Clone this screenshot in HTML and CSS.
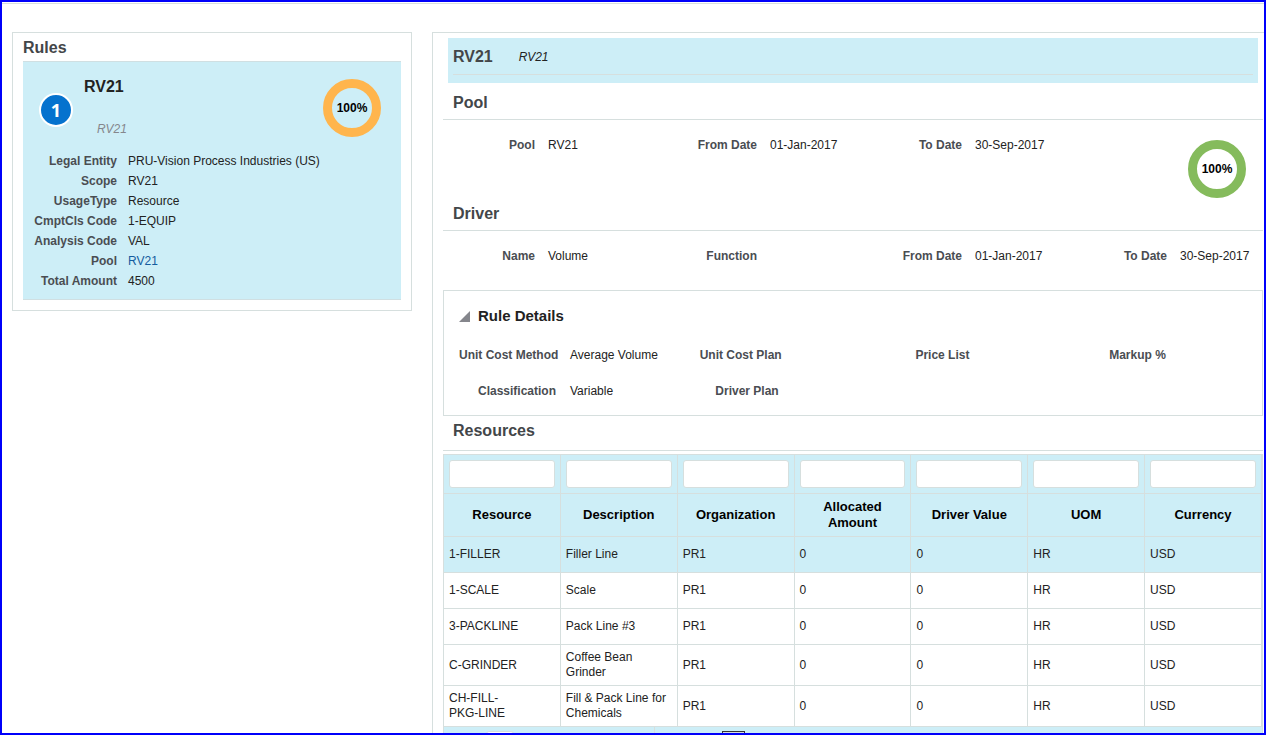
FILE: index.html
```html
<!DOCTYPE html>
<html lang="en">
  <head>
    <meta charset="UTF-8" />
    <meta name="viewport" content="width=device-width, initial-scale=1.0" />
    <title>Rules</title>
    <link rel="stylesheet" href="styles.css">
  </head>
  <body>
    <main class="page">
      <section class="rules">
        <h2 class="rules-title">Rules</h2>
        <div class="card">
          <div class="card-head">
            <span class="badge">1</span>
            <div class="names">
              <h3 class="name">RV21</h3>
              <em class="desc">RV21</em>
            </div>
            <svg class="ring" viewBox="0 0 58 58">
              <circle cx="29" cy="29" r="24.5" fill="none" stroke="#ffb54d" stroke-width="9" />
              <text x="29" y="33" text-anchor="middle">100%</text>
            </svg>
          </div>
          <dl class="facts">
            <dt>Legal Entity</dt><dd>PRU-Vision Process Industries (US)</dd>
            <dt>Scope</dt><dd>RV21</dd>
            <dt>UsageType</dt><dd>Resource</dd>
            <dt>CmptCls Code</dt><dd>1-EQUIP</dd>
            <dt>Analysis Code</dt><dd>VAL</dd>
            <dt>Pool</dt><dd><a href="#pool">RV21</a></dd>
            <dt>Total Amount</dt><dd>4500</dd>
          </dl>
        </div>
      </section>

      <section class="detail">
        <header class="detail-head">
          <div class="detail-head-inner">
            <h2>RV21</h2>
            <em>RV21</em>
          </div>
        </header>

        <h2 class="section-title" id="pool">Pool</h2>
        <div class="fields pool-fields">
          <dl class="field"><dt>Pool</dt><dd>RV21</dd></dl>
          <dl class="field"><dt>From Date</dt><dd>01-Jan-2017</dd></dl>
          <dl class="field"><dt>To Date</dt><dd>30-Sep-2017</dd></dl>
          <svg class="ring" viewBox="0 0 58 58">
            <circle cx="29" cy="29" r="24.5" fill="none" stroke="#85bb5c" stroke-width="9" />
            <text x="29" y="33" text-anchor="middle">100%</text>
          </svg>
        </div>

        <h2 class="section-title">Driver</h2>
        <div class="fields">
          <dl class="field"><dt>Name</dt><dd>Volume</dd></dl>
          <dl class="field"><dt>Function</dt><dd></dd></dl>
          <dl class="field"><dt>From Date</dt><dd>01-Jan-2017</dd></dl>
          <dl class="field"><dt>To Date</dt><dd>30-Sep-2017</dd></dl>
        </div>

        <div class="rule-box">
          <button class="toggle" type="button">
            <svg width="11" height="11" viewBox="0 0 11 11"><path d="M11 0V11H0Z" fill="#85868c" /></svg>
            Rule Details
          </button>
          <div class="rule-fields">
            <dl class="rule-field"><dt class="wide">Unit Cost Method</dt><dd>Average Volume</dd></dl>
            <dl class="rule-field"><dt class="mid">Unit Cost Plan</dt><dd></dd></dl>
            <dl class="rule-field"><dt>Price List</dt><dd></dd></dl>
            <dl class="rule-field"><dt>Markup %</dt><dd></dd></dl>
            <dl class="rule-field"><dt class="wide">Classification</dt><dd>Variable</dd></dl>
            <dl class="rule-field"><dt class="mid">Driver Plan</dt><dd></dd></dl>
          </div>
        </div>

        <h2 class="section-title resources-title">Resources</h2>
        <div class="grid-wrap">
          <table class="grid">
            <thead>
              <tr>
                <td><input type="text" aria-label="Resource" /></td>
                <td><input type="text" aria-label="Description" /></td>
                <td><input type="text" aria-label="Organization" /></td>
                <td><input type="text" aria-label="Allocated Amount" /></td>
                <td><input type="text" aria-label="Driver Value" /></td>
                <td><input type="text" aria-label="UOM" /></td>
                <td><input type="text" aria-label="Currency" /></td>
              </tr>
              <tr>
                <th>Resource</th>
                <th>Description</th>
                <th>Organization</th>
                <th>Allocated Amount</th>
                <th>Driver Value</th>
                <th>UOM</th>
                <th>Currency</th>
              </tr>
            </thead>
            <tbody>
              <tr class="selected"><td>1-FILLER</td><td>Filler Line</td><td>PR1</td><td>0</td><td>0</td><td>HR</td><td>USD</td></tr>
              <tr><td>1-SCALE</td><td>Scale</td><td>PR1</td><td>0</td><td>0</td><td>HR</td><td>USD</td></tr>
              <tr><td>3-PACKLINE</td><td>Pack Line #3</td><td>PR1</td><td>0</td><td>0</td><td>HR</td><td>USD</td></tr>
              <tr><td>C-GRINDER</td><td>Coffee Bean Grinder</td><td>PR1</td><td>0</td><td>0</td><td>HR</td><td>USD</td></tr>
              <tr><td>CH-FILL-<br>PKG-LINE</td><td>Fill &amp; Pack Line for Chemicals</td><td>PR1</td><td>0</td><td>0</td><td>HR</td><td>USD</td></tr>
            </tbody>
          </table>
          <div class="pager">
            <div class="pager-page"><input class="page-input" type="text" aria-label="Page" /></div>
            <div class="pager-nav"><button class="page-btn" type="button" aria-label="Current page"></button></div>
          </div>
        </div>
      </section>
    </main>
  </body>
</html>
```
FILE: styles.css
```css
* {
  box-sizing: border-box;
}
body {
  margin: 0;
  height: 100vh;
  overflow: hidden;
  border: 2px solid #0000fa;
  background: #fff;
  color: #222;
  font-family: "Liberation Sans", Arial, sans-serif;
  font-size: 12px;
  line-height: 20px;
}
h2,
h3,
dl,
dd {
  margin: 0;
}
h2,
h3 {
  font-size: 16px;
  color: #434649;
}
dt {
  font-weight: bold;
  color: #4a4d52;
  text-align: right;
  white-space: nowrap;
}
a {
  color: #145c9e;
  text-decoration: none;
}
.page {
  display: flex;
  align-items: flex-start;
  gap: 20px;
  margin-top: 1px;
  padding: 28px 0 0 10px;
  border-top: 1px solid #d6dfde;
}

/* left panel */
.rules {
  flex: 0 0 400px;
  padding: 0 10px 10px;
  border: 1px solid #d6dfde;
}
.rules-title {
  padding-top: 2px;
  line-height: 26px;
}
.card {
  padding-bottom: 8px;
  background: #cdeef7;
  border-top: 1px solid #d0dfe2;
  border-bottom: 1px solid #d0dfe2;
}
.card-head {
  display: flex;
  align-items: center;
  padding: 15px 20px 12px 16px;
}
.badge {
  width: 34px;
  height: 34px;
  margin-top: 4px;
  border: 2px solid #fff;
  border-radius: 50%;
  background: #0572ce;
  color: #fff;
  font-family: "Open Sans", sans-serif;
  font-size: 18px;
  font-weight: bold;
  line-height: 30px;
  text-align: center;
}
.names {
  flex: 1;
  display: flex;
  flex-direction: column;
  gap: 22px;
  padding-left: 11px;
}
.name {
  color: #222;
}
.desc {
  padding-left: 13px;
  color: #85868c;
}
.ring {
  flex: none;
  width: 58px;
  height: 58px;
}
.ring text {
  font-size: 12px;
  font-weight: bold;
  fill: #000;
}
.facts {
  display: grid;
  grid-template-columns: 94px 1fr;
  column-gap: 11px;
}

/* right panel */
.detail {
  flex: 1;
  min-width: 0;
  padding: 5px 1px 0 10px;
  border-top: 1px solid #d6dfde;
  border-left: 1px solid #d6dfde;
}
.detail-head {
  margin: 0 5px;
  padding: 0 5px 8px;
  background: #cdeef7;
}
.detail-head-inner {
  display: flex;
  align-items: center;
  gap: 26px;
  height: 37px;
  padding-top: 2px;
  border-bottom: 1px solid #d6dfde;
}
.section-title {
  padding: 5px 10px 1px;
  border-bottom: 1px solid #d6dfde;
  line-height: 30px;
}
.fields {
  display: grid;
  grid-template-columns: repeat(4, 1fr);
  padding: 15px 0 24px;
}
.pool-fields {
  height: 74px;
}
.field {
  display: flex;
  gap: 13px;
}
.field dt {
  flex: none;
  width: 109px;
}
.field:first-child dt {
  width: 92px;
}
.pool-fields .ring {
  justify-self: end;
  margin: 5px 17px 0 0;
}
.rule-box {
  padding: 15px 15px 14px;
  border: 1px solid #d6dfde;
}
.toggle {
  display: flex;
  align-items: center;
  gap: 8px;
  margin-bottom: 19px;
  padding: 0;
  border: 0;
  background: none;
  color: #222;
  font: bold 15px/20px "Liberation Sans", Arial, sans-serif;
}
.rule-fields {
  display: grid;
  grid-template-columns: 241fr 216fr 194fr 138fr;
  row-gap: 16px;
}
.rule-field {
  display: flex;
  gap: 14px;
}
.rule-field .wide {
  width: 97px;
}
.rule-field .mid {
  width: 79px;
}
.resources-title {
  padding: 0 10px 4px;
}

/* resources table */
.grid-wrap {
  margin-top: 3px;
  border-right: 1px solid #d6dfde;
}
.grid {
  width: 100%;
  table-layout: fixed;
  border-collapse: collapse;
  line-height: 15px;
}
.grid th,
.grid td {
  height: 36px;
  padding: 5px;
  border: 1px solid #d6dfde;
}
.grid thead,
.selected {
  background: #cdeef7;
}
.grid th {
  color: #000;
  font-size: 13px;
  line-height: 16px;
}
.grid input {
  display: block;
  width: 100%;
  height: 28px;
  border: 1px solid #d6dfde;
  border-radius: 3px;
  background: #fff;
}
.pager {
  display: flex;
  background: #cdeef7;
  border-left: 1px solid #d6dfde;
}
.pager-page {
  width: 211px;
  padding: 4px 0 4px 42px;
  border-right: 1px solid #d6dfde;
}
.pager-nav {
  padding: 4px 0 4px 67px;
}
.page-input {
  display: block;
  width: 28px;
  height: 28px;
  border: 1px solid #d6dfde;
  border-radius: 3px;
}
.page-btn {
  display: block;
  width: 23px;
  height: 28px;
  padding: 0;
  border: 1px solid #333;
  background: #d6dfde;
}
```
